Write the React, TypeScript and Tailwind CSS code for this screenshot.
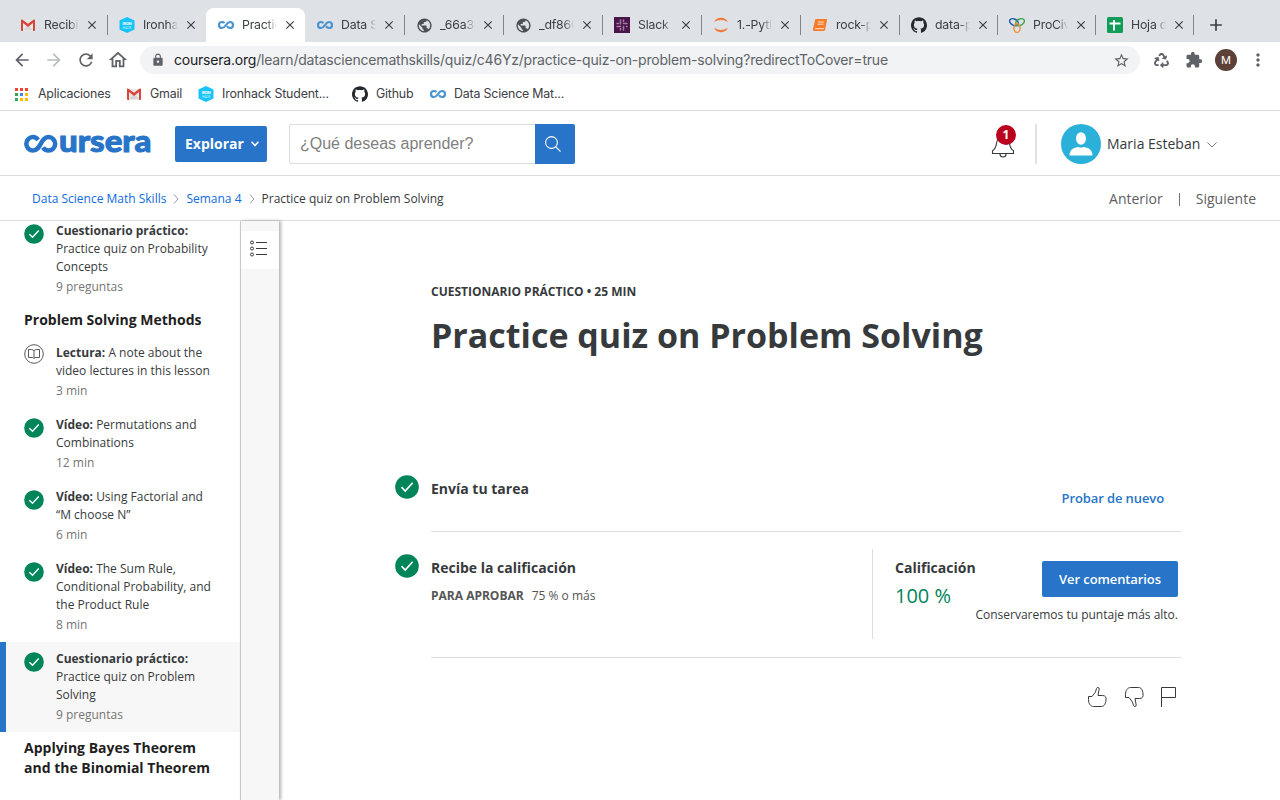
import React from 'react';
import { FaRecycle } from 'react-icons/fa';
import { SiGithub } from 'react-icons/si';
import { MdArrowBack, MdArrowForward, MdRefresh, MdOutlineHome, MdStarOutline, MdExtension, MdMoreVert, MdLock, MdAdd, MdClose, MdPublic } from 'react-icons/md';

const Gmail = () => (
  <svg width="16" height="16" viewBox="0 0 16 16">
    <path d="M2 3h12v11H2z" fill="#e8e8e8" />
    <path d="M3 13l5-5 5 5z" fill="#d5d5d5" />
    <path d="M1 3.500v9.500a1 1 0 0 0 1 1h1V6l5 4 5-4v8h1a1 1 0 0 0 1-1V3.500a1 1 0 0 0-1.600-.8L8 6.700 2.600 2.700A1 1 0 0 0 1 3.500z" fill="#d8453b" />
  </svg>
);

const Iron = () => (
  <svg width="16" height="16" viewBox="0 0 16 16">
    <path d="M8 0l7.500 3.500v9L8 16 .5 12.500v-9z" fill="#18c3fb" />
    <text x="8" y="7.600" textAnchor="middle" fontSize="4" fontWeight="700" fill="#fff" fontFamily="Roboto">IRON</text>
    <text x="8" y="11.600" textAnchor="middle" fontSize="3.400" fill="#c8f2ff" fontFamily="Roboto">HACK</text>
  </svg>
);

const Loop = () => (
  <svg width="16" height="16" viewBox="0 0 16 16">
    <path d="M6.500 6.100C5.800 5.300 5 5 4 5a3 3 0 1 0 0 6c4 0 4-6 8-6a3 3 0 1 1 0 6c-1.500 0-2.300-.7-3-1.800" fill="none" stroke="#4a94cf" strokeWidth="2.200" />
  </svg>
);

const Globe = () => <MdPublic size={17} color="#4d5156" />;

const Slack = () => (
  <svg width="16" height="16" viewBox="0 0 16 16">
    <rect width="16" height="16" fill="#4a154b" />
    <g stroke="#a27ca3" strokeWidth="1.500" strokeLinecap="round">
      <path d="M6.500 3v4M3 6.500h1.500M9.500 3v1.500M9.500 6.500H13M6.500 13v-1.500M3 9.500h3.500M9.500 13V9.500M12.500 9.500h.5" />
    </g>
  </svg>
);

const Jupyter = () => (
  <svg width="16" height="16" viewBox="0 0 16 16" fill="#f37736">
    <path d="M1 5.500a7.600 7.600 0 0 1 14 0C11.500 2.300 4.500 2.300 1 5.500z" />
    <path d="M1 10.500a7.600 7.600 0 0 0 14 0c-3.500 3.200-10.500 3.200-14 0z" />
  </svg>
);

const Book = () => (
  <svg width="16" height="16" viewBox="0 0 16 16">
    <path d="M4.500 2H14a1 1 0 0 1 1 1.300l-2 9.700a1.500 1.500 0 0 1-1.500 1H2.500A1.500 1.500 0 0 1 1 12l2-9a1.500 1.500 0 0 1 1.500-1z" fill="#f47c2a" />
    <path d="M6 5h6M5.500 7.200h6M3 11.700h9" stroke="#ffe2cc" strokeWidth="1" />
  </svg>
);

const Rings = () => (
  <svg width="16" height="16" viewBox="0 0 16 16" fill="none" strokeWidth="1.500">
    <ellipse cx="5" cy="5.200" rx="4.700" ry="3.100" transform="rotate(30 5 5.200)" stroke="#1c5aa8" />
    <ellipse cx="11" cy="5.200" rx="4.700" ry="3.100" transform="rotate(-30 11 5.200)" stroke="#3fa54a" />
    <ellipse cx="8" cy="11" rx="3.100" ry="4.400" stroke="#f3923a" />
  </svg>
);

const Sheet = () => (
  <svg width="16" height="16" viewBox="0 0 16 16">
    <rect width="16" height="16" rx="1.500" fill="#0f9d58" />
    <path d="M2.500 6.500h11M7 3v10.500" stroke="#fff" strokeWidth="2" />
  </svg>
);

const Hub = () => <SiGithub size={16} color="#24292e" />;

type Tab = { icon: () => React.ReactElement; label: string; active?: boolean; bar?: boolean };
const tabs: Tab[] = [
  { icon: Gmail, label: 'Recibid', bar: true },
  { icon: Iron, label: 'Ironhack' },
  { icon: Loop, label: 'Practice', active: true },
  { icon: Loop, label: 'Data Sci', bar: true },
  { icon: Globe, label: '_66a3b', bar: true },
  { icon: Globe, label: '_df8608', bar: true },
  { icon: Slack, label: 'Slack |', bar: true },
  { icon: Jupyter, label: '1.-Pyth', bar: true },
  { icon: Book, label: 'rock-pa', bar: true },
  { icon: Hub, label: 'data-pt', bar: true },
  { icon: Rings, label: 'ProCivi', bar: true },
  { icon: Sheet, label: 'Hoja de', bar: true },
];

const Check = ({ big = false }: { big?: boolean }) => (
  <svg className={big ? 'size-6 shrink-0' : 'size-5 shrink-0'} viewBox="0 0 24 24">
    <circle cx="12" cy="12" r="11.800" fill="#00855a" />
    <path d="M6.500 12.200l3.700 3.800 7.500-8.200" fill="none" stroke="#fff" strokeWidth="1.700" />
  </svg>
);

const ReadIcon = () => (
  <svg className="-mt-0.5 size-5 shrink-0" viewBox="0 0 20 20" fill="none" stroke="#55585c" strokeWidth="1">
    <circle cx="10" cy="10" r="9.300" />
    <path d="M10 6.800C9.500 6 8.500 5.500 7.500 5.500h-3v8h3.800c.8 0 1.400.4 1.700 1 .3-.6.9-1 1.700-1h3.800v-8h-3c-1 0-2 .5-2.500 1.300zM10 6.800v7.500" />
  </svg>
);

type ItemProps = { kind: string; title: string; meta: string; read?: boolean; active?: boolean };
const Item = ({ kind, title, meta, read, active }: ItemProps) => (
  <li className={active ? 'flex border-l-6 border-[#2774c8] bg-[#f7f7f7] pt-2 pr-5 pb-2 pl-[18px]' : 'flex pt-2 pr-5 pb-2 pl-6'}>
    <div className="mt-0.5 mr-3 h-5">{read ? <ReadIcon /> : <Check />}</div>
    <div className="text-xs leading-[18px] text-[#373a3c]">
      <p>
        <b>{kind}:</b> {title}
      </p>
      <p className="mt-0.5 text-[#757575]">{meta}</p>
    </div>
  </li>
);

const Chevron = () => (
  <svg width="6" height="10" viewBox="0 0 6 10" fill="none" stroke="#999" strokeWidth="1">
    <path d="M1 .5L5 5 1 9.500" />
  </svg>
);

const BrowserChrome = () => (
  <header className="font-[Inter,sans-serif] text-[#3c4043]">
    <div className="flex h-[42px] bg-[#dee1e6] pt-2 pl-2">
      {tabs.map((t, i) => (
        <div
          key={i}
          className={
            (i < 9 ? 'w-[99px]' : 'w-[98px]') +
            ' relative flex h-[34px] shrink-0 items-center pl-3 ' +
            (t.active ? 'rounded-t-lg bg-white' : '')
          }
        >
          <span className="grid size-4 shrink-0 place-items-center"><t.icon /></span>
          <span className="ml-2 w-[35px] overflow-hidden mask-r-from-70% text-[12.300px] tracking-[-0.2px] whitespace-nowrap">{t.label}</span>
          <MdClose size={14} className="ml-1.5 shrink-0" />
          {t.bar && <i className="absolute top-[7px] right-[-1px] h-5 w-px bg-[#80868b]" />}
        </div>
      ))}
      <MdAdd size={20} className="mt-[7px] ml-[13px]" />
    </div>
    <div className="flex h-[37px] items-center pr-3 pb-px pl-3 text-[#5f6368]">
      <MdArrowBack size={20} />
      <MdArrowForward size={20} className="ml-3 text-[#babcbe]" />
      <MdRefresh size={20} className="ml-3" />
      <MdOutlineHome size={22} className="ml-[11px]" />
      <div className="ml-[11px] flex h-7 w-[1001px] items-center rounded-full bg-[#f1f3f4] pr-2.5 pl-[11px]">
        <MdLock size={14} />
        <span className="ml-[9px] text-sm tracking-[-0.2px]"><span className="text-[#202124]">coursera.org</span>/learn/datasciencemathskills/quiz/c46Yz/practice-quiz-on-problem-solving?redirectToCover=true</span>
        <MdStarOutline size={17} className="ml-auto" />
      </div>
      <FaRecycle size={15} className="ml-[14px]" />
      <MdExtension size={18} className="ml-4" />
      <span className="ml-3 grid size-[22px] place-items-center rounded-full bg-[#5d4037] text-[11px] text-white">M</span>
      <MdMoreVert size={20} className="ml-[11px]" />
    </div>
    <div className="flex h-8 items-center border-b border-[#dadce0] pb-px text-[12.400px] tracking-[-0.19px]">
      <svg className="ml-[14px]" width="14" height="14" viewBox="0 0 14 14">
        {['#ea4335', '#ea4335', '#ea4335', '#34a853', '#4285f4', '#fbbc04', '#34a853', '#fbbc04', '#fbbc04'].map((c, i) => (
          <rect key={i} x={1 + (i % 3) * 5} y={Math.floor(i / 3) * 5 + 1} width="3" height="3" fill={c} />
        ))}
      </svg>
      <span className="ml-2.5 w-[88px]">Aplicaciones</span>
      <Gmail />
      <span className="ml-2 w-12">Gmail</span>
      <Iron />
      <span className="ml-2 w-[130px]">Ironhack Student...</span>
      <Hub />
      <span className="ml-2 w-[54px]">Github</span>
      <Loop />
      <span className="ml-2">Data Science Mat...</span>
    </div>
  </header>
);

const SiteHeader = () => (
  <div className="flex h-[65px] items-center border-b border-[#dcdcdf] pt-0.5 pl-6">
    <svg width="128" height="22" viewBox="0 0 128 22" aria-label="coursera">
      <path d="M14.200 6.800C12.600 4.800 11 4.100 9 4.100a6.700 6.700 0 1 0 0 13.400c8.200 0 7.200-13.400 15.500-13.400a6.700 6.700 0 1 1 0 13.400c-2.600 0-4.300-1-5.500-3" fill="none" stroke="#2774c8" strokeWidth="4.500" />
      <text x="35" y="19.300" textLength="92.500" lengthAdjust="spacingAndGlyphs" fontFamily="Lato, sans-serif" fontWeight="900" fontSize="31" fill="#2774c8" stroke="#2774c8" strokeWidth="1">ursera</text>
    </svg>
    <button className="ml-[23px] flex h-9 w-[92px] items-center rounded-xs bg-[#2774c8] pl-2.5 text-sm font-bold text-white">
      Explorar
      <svg className="ml-[7px]" width="8" height="6" viewBox="0 0 8 6" fill="none" stroke="currentColor" strokeWidth="1.600"><path d="M.6.8L4 4.500 7.400.8" /></svg>
    </button>
    <div className="ml-[22px] flex h-10 w-[286px] items-center rounded-xs border border-[#dcdcdc] pl-2.5 font-['Liberation_Sans',sans-serif] text-base text-[#808080]">
      <span>¿Qué deseas aprender?</span>
      <span className="-mr-px ml-auto grid h-10 w-10 place-items-center rounded-r-xs bg-[#2774c8]">
        <svg className="mr-1" width="16" height="16" viewBox="0 0 16 16" fill="none" stroke="#fff" strokeWidth="1.100"><circle cx="6.500" cy="6.500" r="5.900" /><path d="M10.800 10.800l4.700 4.700" /></svg>
      </span>
    </div>
    <div className="relative ml-[415px] h-10 w-[47px] border-r-2 border-[#e1e1e1]">
      <svg className="absolute top-[11px] left-[1px]" width="24" height="24" viewBox="0 0 24 24" fill="none" stroke="#373a3c" strokeWidth="1.100">
        <path d="M1.500 18.500h21v-2.700c-3-2-3.500-4-4-7.500C18 4 15.500 2 12 2S6 4 5.500 8.300c-.5 3.500-1 5.500-4 7.500zM9 19a3 3 0 0 0 6 0" />
      </svg>
      <span className="absolute top-px left-[6px] grid size-5 place-items-center rounded-full bg-[#b9001c] text-xs font-bold text-white">1</span>
    </div>
    <svg className="ml-6" width="40" height="40" viewBox="0 0 40 40">
      <circle cx="20" cy="20" r="20" fill="#2bb1d9" />
      <ellipse cx="20" cy="14.500" rx="5" ry="6.200" fill="#fff" />
      <path d="M8.500 31.500c0-6 4.500-8 9-8.500 1.500.8 3.500.8 5 0 4.500.5 9 2.500 9 8.500z" fill="#fff" />
    </svg>
    <span className="ml-1.5 text-sm text-[#373a3c]">Maria Esteban</span>
    <svg className="mt-0.5 ml-[7px]" width="10" height="6" viewBox="0 0 10 6" fill="none" stroke="#757575"><path d="M.4.5L5 5 9.600.5" /></svg>
  </div>
);

export default function App() {
  return (
    <div className="flex h-[800px] w-[1280px] flex-col overflow-hidden bg-white font-['Open_Sans','Noto_Sans',sans-serif]">
      <BrowserChrome />
      <SiteHeader />
      <nav className="flex h-[45px] shrink-0 items-center border-b border-[#dcdcdf] pt-0.5 pr-6 pl-8 text-xs text-[#0f6ae0]">
        <span className="mr-[7px]">Data Science Math Skills</span>
        <Chevron />
        <span className="mx-[7px]">Semana 4</span>
        <Chevron />
        <span className="ml-[7px] text-[#373a3c]">Practice quiz on Problem Solving</span>
        <span className="ml-auto text-sm text-[#5e6063]">Anterior</span>
        <i className="mx-4 h-[13px] w-px bg-[#757575]" />
        <span className="text-sm text-[#5e6063]">Siguiente</span>
      </nav>
      <div className="flex min-h-0 flex-1">
        <aside className="h-full w-60 shrink-0 overflow-hidden">
          <ul className="-mt-[7px]">
            <Item kind="Cuestionario práctico" title="Practice quiz on Probability Concepts" meta="9 preguntas" />
          </ul>
          <h2 className="mt-1.5 mb-1.5 pl-6 text-sm leading-5 font-bold text-[#1f1f1f]">Problem Solving Methods</h2>
          <ul>
            <Item read kind="Lectura" title="A note about the video lectures in this lesson" meta="3 min" />
            <Item kind="Vídeo" title="Permutations and Combinations" meta="12 min" />
            <Item kind="Vídeo" title="Using Factorial and “M choose N”" meta="6 min" />
            <Item kind="Vídeo" title="The Sum Rule, Conditional Probability, and the Product Rule" meta="8 min" />
            <Item active kind="Cuestionario práctico" title="Practice quiz on Problem Solving" meta="9 preguntas" />
          </ul>
          <h2 className="mt-1.5 pr-5 pl-6 text-sm leading-5 font-bold text-[#1f1f1f]">Applying Bayes Theorem and the Binomial Theorem</h2>
        </aside>
        <div className="w-[39px] shrink-0 border-l border-[#c8c8c8] bg-[#f7f7f7] pt-2.5 shadow-[2px_0_3px_rgba(0,0,0,0.3)]">
          <div className="h-[38px] bg-white pt-[9px] pl-[9px]">
            <svg width="18" height="18" viewBox="0 0 18 18" fill="none" stroke="#373a3c" strokeWidth="1">
              <circle cx="2" cy="2.500" r="1.500" /><circle cx="2" cy="8.500" r="1.500" /><circle cx="2" cy="14.500" r="1.500" />
              <path d="M6 2.500h11M6 8.500h11M6 14.500h11" />
            </svg>
          </div>
        </div>
        <main className="ml-[116px] w-[786px] text-[#373a3c]">
          <div className="pt-[62px] pl-9">
            <p className="text-xs leading-[18px] font-bold">CUESTIONARIO PRÁCTICO • 25 MIN</p>
            <h1 className="mt-[11px] text-[34px] leading-[46px] font-bold">Practice quiz on Problem Solving</h1>
          </div>
          <div className="mt-[117px] flex h-[57px] items-start">
            <Check big />
            <div className="ml-3 flex h-[57px] flex-1 justify-between border-b border-[#dcdcdc] pr-[17px] text-sm font-bold">
              <span className="mt-1">Envía tu tarea</span>
              <span className="mt-3.5 text-[13px] font-semibold tracking-[-0.1px] text-[#2774c8]">Probar de nuevo</span>
            </div>
          </div>
          <div className="flex h-[126px] pt-[17px]">
            <div className="mt-[5px]"><Check big /></div>
            <div className="-mt-[17px] ml-3 flex h-[126px] flex-1 border-b border-[#dcdcdc] pt-[17px]">
              <div className="w-[441px] pt-[9px]">
                <p className="text-sm font-bold">Recibe la calificación</p>
                <p className="mt-[9px] text-xs leading-[18px] text-[#555]"><b className="mr-2">PARA APROBAR</b>75 % o más</p>
              </div>
              <div className="flex h-[90px] flex-1 justify-between border-l border-[#dcdcdc] pt-[9px] pr-[3px] pl-[22px]">
                <div className="w-20">
                  <p className="text-sm font-bold">Calificación</p>
                  <p className="mt-[5px] text-xl leading-[26px] whitespace-nowrap text-[#00855a]">100 %</p>
                </div>
                <div className="flex flex-col items-end pt-[3px]">
                  <button className="h-9 w-[136px] rounded-xs bg-[#2774c8] pt-0.5 text-[13px] font-semibold tracking-[-0.1px] text-white">Ver comentarios</button>
                  <p className="mt-[9px] w-0 text-xs leading-[18px] whitespace-nowrap [direction:rtl]"><bdi>Conservaremos tu puntaje más alto.</bdi></p>
                </div>
              </div>
            </div>
          </div>
          <div className="mt-7 flex justify-end gap-[17px] pr-1">
            <svg width="20" height="22" viewBox="0 0 20 22" fill="none" stroke="#373a3c"><path d="M1.500 10.500H5l3.500-4.500 1-3.500c.5-1.600 2.900-1.300 2.700.5L11 9.500h4.500c3 0 4 2 3.500 4.500-.3 4-2 6.500-4.500 6.500h-8c-3 0-5-3-5-7z" /></svg>
            <svg width="20" height="22" viewBox="0 0 20 22" fill="none" stroke="#373a3c"><path d="M1.500 11.500H5L8.500 16l1 3.500c.5 1.600 2.900 1.300 2.700-.5L11 12.500h4.500c3 0 4-2 3.500-4.500-.3-4.500-2-6.500-4.500-6.500h-8c-3 0-5 3-5 7z" /></svg>
            <svg className="-ml-px" width="17" height="22" viewBox="0 0 17 22" fill="none" stroke="#373a3c"><path d="M1.500 21V1.500h14v10h-14" /></svg>
          </div>
        </main>
      </div>
    </div>
  );
}
